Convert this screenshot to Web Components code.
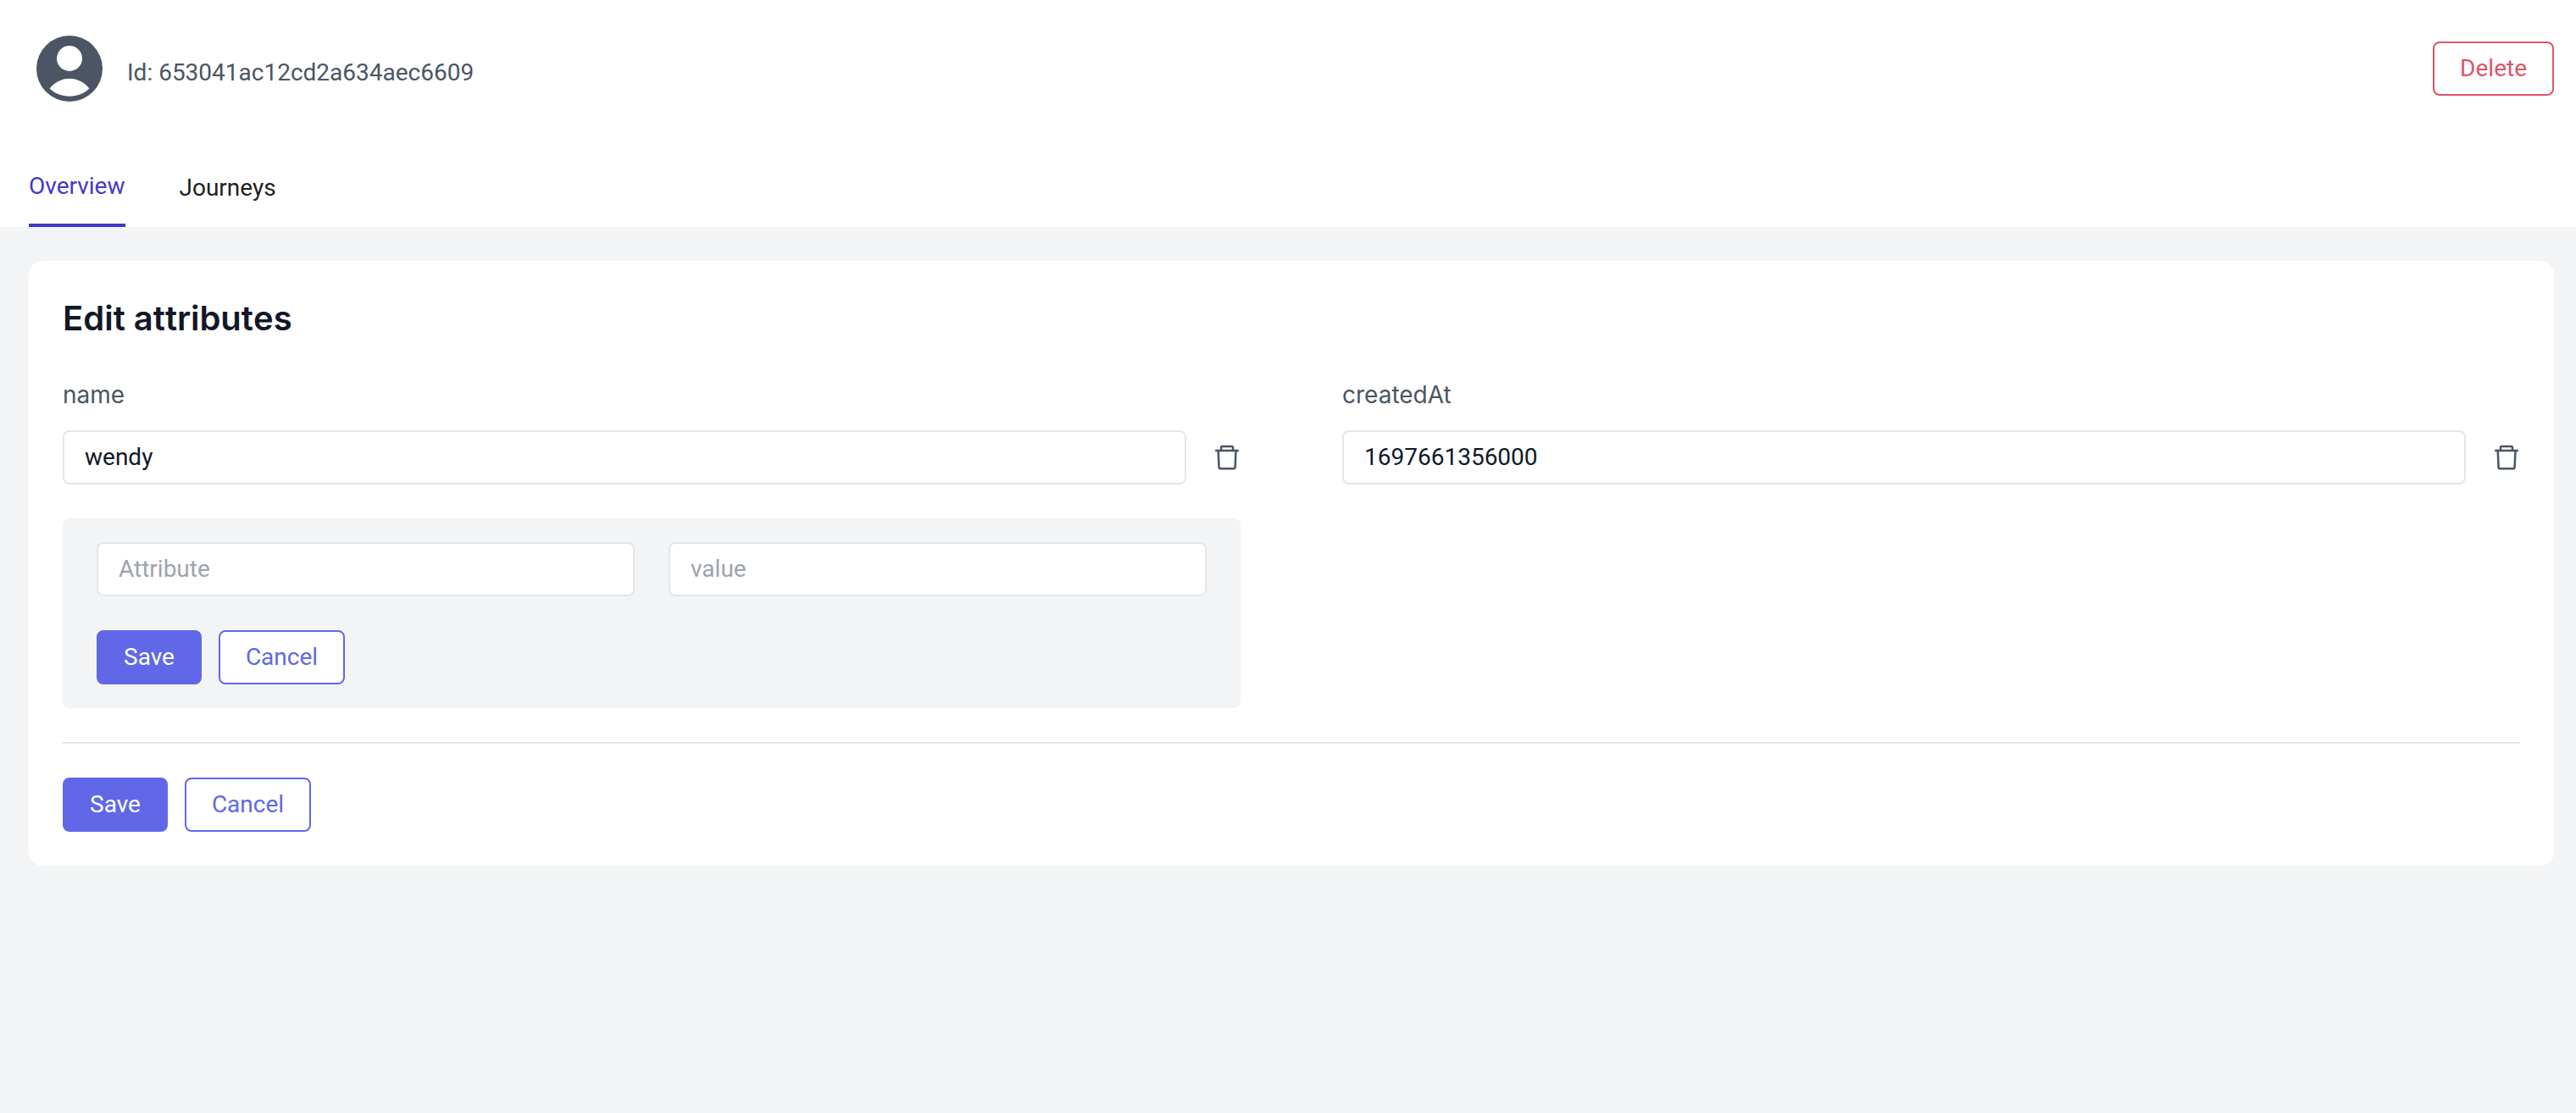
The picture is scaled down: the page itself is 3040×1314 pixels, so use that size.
<!DOCTYPE html>
<html lang="en">
<head>
<meta charset="utf-8">
<title>Person</title>
<style>
  body {
    margin: 0;
    background: #f3f4f6;
    font-family: Roboto, "Liberation Sans", sans-serif;
    font-size: 28px;
    line-height: 38px;
    color: #111827;
  }
</style>
</head>
<body>
<person-page></person-page>

<template id="app-button">
  <style>
    :host { display: block; }

    button {
      display: block;
      height: 64px;
      padding: 0 30px;
      border: 2px solid #6168e8;
      border-radius: 8px;
      background: #fff;
      color: #6168e8;
      font: inherit;
      cursor: pointer;
    }

    :host([kind="primary"]) button {
      background: #6168e8;
      color: #fff;
    }

    :host([kind="danger"]) button {
      border-color: #dc5568;
      color: #dc5568;
    }
  </style>
  <button type="button"><slot></slot></button>
</template>

<template id="text-field">
  <style>
    :host { display: block; }

    label {
      display: block;
      margin-bottom: 20px;
      font-family: Inter, "Liberation Sans", sans-serif;
      line-height: 44px;
      color: #4b5563;
    }

    label[hidden] { display: none; }

    .row {
      display: flex;
      align-items: center;
      gap: 32px;
    }

    input {
      flex: 1;
      min-width: 0;
      height: 64px;
      box-sizing: border-box;
      padding: 0 24px 2px;
      border: 2px solid #e3e6ea;
      border-radius: 8px;
      background: #fff;
      color: #111827;
      font: inherit;
    }

    input::placeholder {
      color: #9ca3af;
      opacity: 1;
    }
  </style>
  <label for="input"></label>
  <div class="row">
    <input id="input" type="text">
    <slot></slot>
  </div>
</template>

<template id="trash-button">
  <style>
    :host { display: block; }

    button {
      display: block;
      padding: 0;
      border: 0;
      background: none;
      color: #4b5563;
      cursor: pointer;
    }

    svg { display: block; }
  </style>
  <button type="button" aria-label="Remove attribute">
    <svg width="32" height="32" viewBox="0 0 32 32" fill="none" stroke="currentColor" stroke-width="2.500" stroke-linecap="round" stroke-linejoin="round">
      <path d="M3.200 8H28.800"/>
      <path d="M9 8V4.500Q9 3 10.500 3H21.500Q23 3 23 4.500V8"/>
      <path d="M5.700 8L6.600 27.700Q6.700 29.200 8.200 29.200H24Q25.500 29.200 25.600 27.700L26.500 8"/>
    </svg>
  </button>
</template>

<template id="page-header">
  <style>
    :host {
      display: block;
      padding: 42px 26px 0 34px;
      background: #fff;
    }

    .profile {
      display: flex;
      align-items: center;
      gap: 29px;
      padding-left: 9px;
      color: #4b5563;
    }

    .id { flex: 1; padding-top: 10px; }

    svg { display: block; }

    nav {
      display: flex;
      gap: 64px;
      margin-top: 54px;
    }
  </style>
  <div class="profile">
    <svg width="78" height="78" viewBox="0 0 78 78" aria-hidden="true">
      <circle cx="39" cy="39" r="39" fill="#4b5563"/>
      <circle cx="39" cy="27" r="15" fill="#fff"/>
      <path d="M15.600 62.500C21 55.500 29.500 50.700 39 50.700S57 55.500 62.400 62.500C56.500 68.400 48 71.700 39 71.700S21.500 68.400 15.600 62.500Z" fill="#fff"/>
    </svg>
    <div class="id">Id: <slot name="id"></slot></div>
    <slot name="actions"></slot>
  </div>
  <nav><slot></slot></nav>
</template>

<template id="nav-tab">
  <style>
    :host { display: flex; }

    a {
      display: flex;
      align-items: center;
      height: 94px;
      box-sizing: border-box;
      padding-top: 2px;
      color: #1f1f1f;
      text-decoration: none;
    }

    :host([active]) a {
      border-bottom: 4px solid #4338ca;
      color: #4338ca;
    }
  </style>
  <a href="#"><slot></slot></a>
</template>

<template id="edit-card">
  <style>
    :host {
      display: block;
      margin: 40px 26px 40px 34px;
      padding: 40px;
      border-radius: 16px;
      background: #fff;
    }

    h2 {
      margin: 0 0 40px;
      font: 600 40px/56px Inter, "Liberation Sans", sans-serif;
      font-kerning: none;
    }

    .grid {
      display: grid;
      grid-template-columns: 1fr 1fr;
      gap: 40px 120px;
    }

    .new-attribute {
      display: grid;
      grid-template-columns: 1fr 1fr;
      gap: 40px;
      padding: 28px 40px;
      border-radius: 8px;
      background: #f3f4f6;
    }

    .buttons {
      display: flex;
      gap: 20px;
    }

    hr {
      height: 2px;
      margin: 40px 0;
      border: 0;
      background: #e3e6ea;
    }
  </style>
  <h2>Edit attributes</h2>
  <div class="grid">
    <text-field label="name" value="wendy"><trash-button></trash-button></text-field>
    <text-field label="createdAt" value="1697661356000"><trash-button></trash-button></text-field>
    <div class="new-attribute">
      <text-field placeholder="Attribute"></text-field>
      <text-field placeholder="value"></text-field>
      <div class="buttons">
        <app-button kind="primary">Save</app-button>
        <app-button>Cancel</app-button>
      </div>
    </div>
  </div>
  <hr>
  <div class="buttons">
    <app-button kind="primary">Save</app-button>
    <app-button>Cancel</app-button>
  </div>
</template>

<template id="person-page">
  <style>
    :host { display: block; }
  </style>
  <page-header>
    <span slot="id">653041ac12cd2a634aec6609</span>
    <app-button slot="actions" kind="danger">Delete</app-button>
    <nav-tab active>Overview</nav-tab>
    <nav-tab>Journeys</nav-tab>
  </page-header>
  <main>
    <edit-card></edit-card>
  </main>
</template>

<script>
class BaseElement extends HTMLElement {
  constructor() {
    super();
    const template = document.getElementById(this.localName);
    this.attachShadow({ mode: 'open' });
    this.shadowRoot.appendChild(template.content.cloneNode(true));
  }
}

class AppButton extends BaseElement {}
class TrashButton extends BaseElement {}
class PageHeader extends BaseElement {}
class NavTab extends BaseElement {}
class EditCard extends BaseElement {}
class PersonPage extends BaseElement {}

class TextField extends BaseElement {
  connectedCallback() {
    const $label = this.shadowRoot.querySelector('label');
    const $input = this.shadowRoot.querySelector('input');
    const label = this.getAttribute('label');
    const placeholder = this.getAttribute('placeholder') || '';

    $label.textContent = label || '';
    $label.hidden = !label;
    $input.value = this.getAttribute('value') || '';
    $input.placeholder = placeholder;
    if (!label) {
      $input.setAttribute('aria-label', placeholder);
    }
  }
}

customElements.define('app-button', AppButton);
customElements.define('trash-button', TrashButton);
customElements.define('text-field', TextField);
customElements.define('nav-tab', NavTab);
customElements.define('page-header', PageHeader);
customElements.define('edit-card', EditCard);
customElements.define('person-page', PersonPage);
</script>
</body>
</html>
